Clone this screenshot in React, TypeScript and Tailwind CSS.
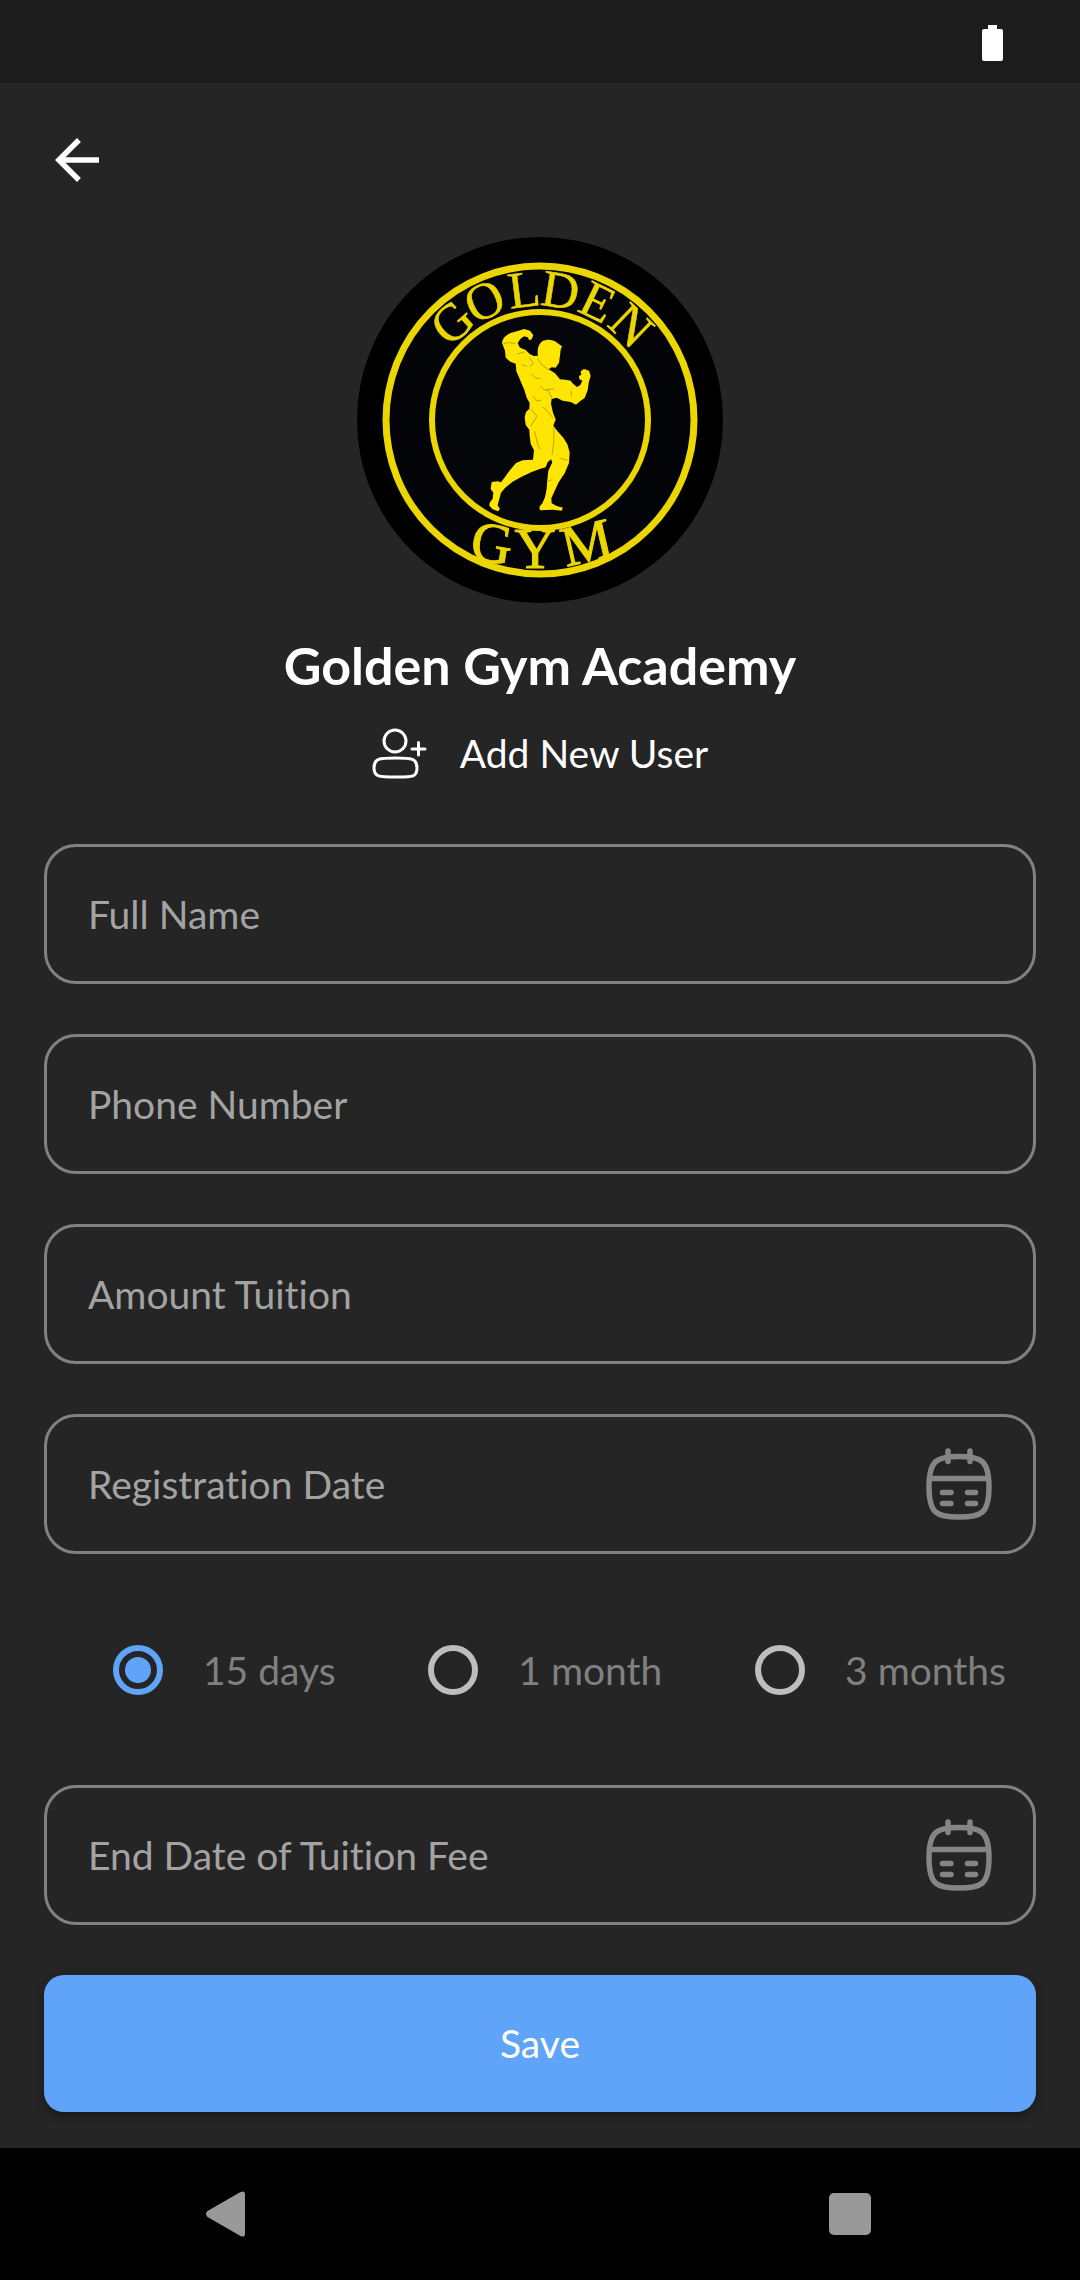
import { useState } from 'react';

const GOLD = '#ecd600';

const topLetters = [
  { char: 'G', angle: -42 },
  { char: 'O', angle: -25 },
  { char: 'L', angle: -7 },
  { char: 'D', angle: 9 },
  { char: 'E', angle: 26 },
  { char: 'N', angle: 44 },
];

const bottomLetters = [
  { char: 'G', transform: 'translate(-51 142) rotate(9)' },
  { char: 'Y', transform: 'translate(-5 148)' },
  { char: 'M', transform: 'translate(51 141) rotate(-13)' },
];

function GymLogo() {
  return (
    <svg
      viewBox="-183 -183 366 366"
      className="size-[366px]"
      role="img"
      aria-label="Golden Gym"
      fontFamily="'Liberation Serif', serif"
      textAnchor="middle"
    >
      <circle r="183" fill="#000" />
      <circle r="154" fill="#030407" stroke={GOLD} strokeWidth="7" />
      <circle r="108" fill="#04060a" stroke={GOLD} strokeWidth="6" />
      <g fill={GOLD} stroke={GOLD}>
        <g fontSize="52" strokeWidth="0.500">
          {topLetters.map(({ char, angle }) => (
            <text key={angle} transform={`rotate(${angle}) translate(0 -114)`}>
              {char}
            </text>
          ))}
        </g>
        <g fontSize="57" strokeWidth="1">
          {bottomLetters.map(({ char, transform }) => (
            <text key={transform} transform={transform}>
              {char}
            </text>
          ))}
        </g>
      </g>
      {/* Bodybuilder figure, drawn at three times its size */}
      <g transform="translate(-60 -110) scale(0.3333)" strokeLinejoin="round">
        <path
          fill="#ffe500"
          d="M66 98 C68 84 80 73 94 68 L116 62 L132 57 L150 62 L160 76 L155 88 L148 91 L143 82 L132 79 L121 87 L113 100 L120 113 L136 119 L150 133 L162 138 L174 137 C171 121 174 103 187 94 C201 87 218 88 231 98 L246 109 L242 119 L240 137 L237 158 L227 173 L215 172 L206 178 L225 190 L240 208 L257 209 L272 212 L280 222 L291 231 L301 225 L307 212 L298 208 L297 198 L304 194 L302 184 L312 177 L327 182 L332 198 L326 218 L323 241 L314 264 L301 273 L288 284 L272 276 L248 272 L230 263 L215 267 L213 281 L219 308 L227 328 L220 347 L234 365 L250 383 L262 403 L269 427 L267 459 L254 490 L236 517 L225 541 L214 565 L215 580 L230 588 L249 593 L245 602 L218 599 L180 601 L178 591 L187 580 L195 562 L200 537 L202 510 L205 482 L217 457 L213 448 L203 457 L197 472 L179 477 L155 486 L125 500 L98 515 L75 534 L63 548 L57 570 L53 586 L60 597 L54 604 L38 598 L28 587 L29 578 L38 566 L40 548 L32 537 L35 516 L53 514 L63 517 L75 501 L91 479 L108 459 L128 451 L159 449 L162 421 L152 401 L149 377 L148 359 L137 345 L134 322 L138 306 L148 296 L149 279 L140 263 L133 239 L124 219 L117 202 L109 184 L107 161 L91 155 L77 143 L75 122 Z"
        />
        <g fill="none" stroke="#a89700" strokeWidth="2.500" strokeLinecap="round">
          <path d="M72 100 L88 98 L105 100 M113 132 L132 126 M147 143 L160 158 L151 170 M127 164 L139 169 M156 194 L168 204 L180 206 M174 147 L186 165 L205 179" />
          <path d="M181 228 L194 241 L204 240 L216 264 M199 239 L221 237 M160 259 L170 273 L184 270 M151 297 L171 318 L153 348 M190 292 L205 306 L219 325" />
          <path d="M164 365 L172 399 L180 417 M222 352 L221 400 L216 434 M240 445 L261 450 M207 513 L216 509 M273 243 L275 258" />
        </g>
      </g>
    </svg>
  );
}

function AddUserIcon() {
  return (
    <svg
      viewBox="0 0 56 52"
      className="h-[52px] w-[56px]"
      fill="none"
      stroke="currentColor"
      strokeWidth="3"
      strokeLinecap="round"
      aria-hidden="true"
    >
      <circle cx="23" cy="14" r="11" />
      <path d="M46.500 15.500 V28 M40 22 H53" />
      <path d="M2 41 C2 31.500 7 31 23.500 31 S45 31.500 45 41 S40 50 23.500 50 S2 50 2 41 Z" />
    </svg>
  );
}

function CalendarIcon() {
  return (
    <svg
      viewBox="0 0 66 72"
      className="h-[72px] w-[66px]"
      fill="none"
      stroke="currentColor"
      strokeWidth="5.500"
      strokeLinecap="round"
      aria-hidden="true"
    >
      <path d="M33 8.500 C55 8.500 63 12 63 39 S55 69 33 69 S3 66 3 39 S11 8.500 33 8.500 Z" />
      <path d="M4 30.500 H62" strokeLinecap="butt" />
      <path d="M22 3 V13.500 M44 3 V13.500" />
      <path d="M16.500 44.500 H25 M41.500 44.500 H49.500 M16.500 55.500 H25 M41.500 55.500 H49.500" />
    </svg>
  );
}

function Field({
  label,
  type = 'text',
  calendar = false,
}: {
  label: string;
  type?: string;
  calendar?: boolean;
}) {
  return (
    <div className="flex h-[140px] items-center rounded-[32px] border-3 border-[#818181] px-[41px] focus-within:border-[#60a4fa]">
      <input
        type={type}
        aria-label={label}
        placeholder={label}
        className="h-full min-w-0 flex-1 bg-transparent text-[39px] text-[#dddddd] outline-none placeholder:text-[#a3a3a3]"
      />
      {calendar && (
        <button type="button" aria-label={`Choose ${label}`} className="text-[#858585]">
          <CalendarIcon />
        </button>
      )}
    </div>
  );
}

const periods = ['15 days', '1 month', '3 months'];

export default function App() {
  const [period, setPeriod] = useState(periods[0]);

  return (
    <div className="flex min-h-screen flex-col bg-[#252525] font-['Lato',sans-serif] text-white [font-variant-ligatures:none]">
      <div className="flex h-[83px] items-start justify-end bg-[#1c1c1c] pt-[25px] pr-[77px]">
        <svg viewBox="0 0 21 36" className="h-[36px] w-[21px]" fill="#fff" role="img" aria-label="Battery full">
          <rect x="6" width="9" height="6" />
          <rect y="4" width="21" height="32" rx="2" />
        </svg>
      </div>

      <header className="flex px-[44px] pt-[44px]">
        <button type="button" aria-label="Back">
          <svg viewBox="0 0 24 24" className="size-[66px]" fill="currentColor" aria-hidden="true">
            <path d="M20 11H7.830l5.590-5.590L12 4l-8 8 8 8 1.410-1.410L7.830 13H20z" />
          </svg>
        </button>
      </header>

      <main className="flex flex-1 flex-col px-[44px] pt-[44px] pb-[36px]">
        <div className="flex flex-col items-center">
          <GymLogo />
          <h1 className="mt-[30px] text-[52px] leading-[64px] font-bold">Golden Gym Academy</h1>
          <div className="mt-[30px] flex items-center gap-[32px]">
            <AddUserIcon />
            <h2 className="text-[39px] leading-[52px]">Add New User</h2>
          </div>
        </div>

        <form className="mt-[65px] flex flex-col gap-[50px]" onSubmit={(e) => e.preventDefault()}>
          <Field label="Full Name" />
          <Field label="Phone Number" type="tel" />
          <Field label="Amount Tuition" />
          <Field label="Registration Date" calendar />

          <fieldset
            aria-label="Membership period"
            className="mt-[41px] mb-[40px] flex h-[50px] items-center justify-between pr-[30px] pl-[69px]"
          >
            {periods.map((name) => (
              <label key={name} className="flex items-center gap-[40px] text-[39px] leading-[50px] text-[#808080]">
                <input
                  type="radio"
                  name="period"
                  checked={period === name}
                  onChange={() => setPeriod(name)}
                  className="grid size-[50px] appearance-none place-items-center rounded-full border-[6px] border-[#bdbdbd] before:size-[26px] before:rounded-full before:content-[''] checked:border-[#60a4fa] checked:before:bg-[#60a4fa]"
                />
                {name}
              </label>
            ))}
          </fieldset>

          <Field label="End Date of Tuition Fee" calendar />
          <button
            type="submit"
            className="h-[137px] rounded-[20px] bg-[#60a4fa] text-[39px] shadow-[0_4px_8px_rgba(0,0,0,0.35)]"
          >
            Save
          </button>
        </form>
      </main>

      <nav className="flex h-[132px] items-center justify-between bg-black pr-[209px] pl-[206px]">
        <button type="button" aria-label="System back">
          <svg viewBox="0 0 39 46" className="h-[46px] w-[39px]" fill="#999" aria-hidden="true">
            <path d="M1.500 20 L34.500 1 Q39 -1 39 3.500 V42.500 Q39 47 34.500 45 L1.500 26 Q-1.500 23 1.500 20 Z" />
          </svg>
        </button>
        <button type="button" aria-label="Recent apps" className="size-[42px] rounded-[5px] bg-[#999999]" />
      </nav>
    </div>
  );
}
